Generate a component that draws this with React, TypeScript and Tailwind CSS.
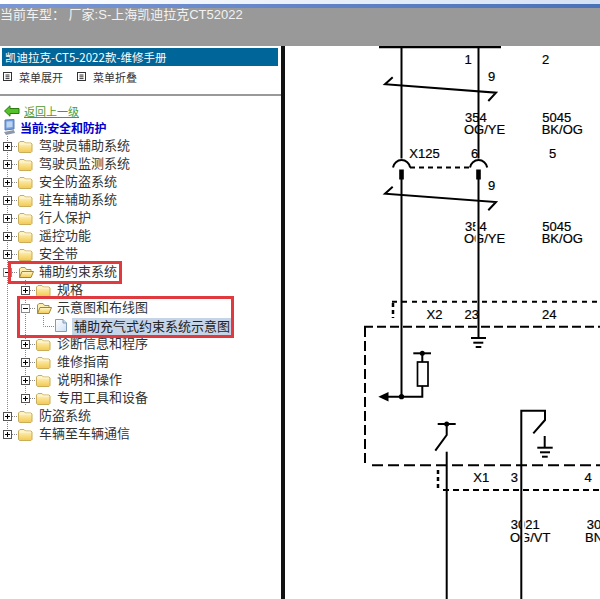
import React from "react";

const Folder = ({ open }: { open?: boolean }) => (
  <svg width="16" height="15" viewBox="0 0 16 15">
    <defs>
      <linearGradient id="fy" x1="0" y1="0" x2="0" y2="1">
        <stop offset="0" stopColor="#fff8cf" />
        <stop offset="1" stopColor="#f3c94e" />
      </linearGradient>
    </defs>
    {open ? (
      <>
        <path d="M1.5 12.5 V4 L3 2.5 H7 L8.5 4.5 H13 V6.5" fill="#fdf0b0" stroke="#a89040" />
        <path d="M1.5 12.5 L4 6.5 H15.5 L13 12.5 Z" fill="url(#fy)" stroke="#a08630" />
      </>
    ) : (
      <>
        <path d="M0.5 4 L2 2.5 H6 L7.5 4 H13 L14 5 V12.5 L13 13.5 H1.5 L0.5 12.5 Z" fill="url(#fy)" stroke="#c9ad58" />
        <path d="M1.5 5 H13" stroke="#fff8d8" />
      </>
    )}
  </svg>
);

const FileIcon = () => (
  <svg width="14" height="16" viewBox="0 0 14 16">
    <defs>
      <linearGradient id="fb" x1="0" y1="0" x2="1" y2="1">
        <stop offset="0" stopColor="#ffffff" />
        <stop offset="1" stopColor="#cfe0f4" />
      </linearGradient>
    </defs>
    <path d="M1.5 2.5 H9 L12.5 6 V14.5 H1.5 Z" fill="url(#fb)" stroke="#7f9db9" />
    <path d="M9 2.5 V6 H12.5" fill="#c9d9ee" stroke="#7f9db9" />
  </svg>
);

const Dots = ({ d }: { d: string }) => <path d={d} stroke="#888" strokeDasharray="1 1" fill="none" />;

/* cell of 18px: guide lines and the toggle of the tree */
const Guide = ({ mode }: { mode: "line" | "plus" | "minus" | "last" | "lastplus" }) => (
  <svg width="18" height="18" viewBox="0 0 18 18" className="shrink-0">
    {mode === "line" && <Dots d="M7.5 0 V18" />}
    {mode === "last" && <Dots d="M7.5 0 V10.5 H18" />}
    {mode !== "line" && mode !== "last" && (
      <>
        <Dots d={mode === "lastplus" ? "M7.5 0 V5 M12 10.5 H18" : "M7.5 0 V18 M12 10.5 H18"} />
        <rect x="3.5" y="6.5" width="8" height="8" fill="#fff" stroke={mode === "minus" ? "#8a8a8a" : "#555"} />
        <path d="M5 10.5 H10" stroke="#000" />
        {(mode === "plus" || mode === "lastplus") && <path d="M7.5 8 V13" stroke="#000" />}
      </>
    )}
  </svg>
);

type Row = {
  label: string;
  guides: ("line" | "plus" | "minus" | "last" | "lastplus")[];
  open?: boolean;
  file?: boolean;
};

const rows: Row[] = [
  { label: "驾驶员辅助系统", guides: ["plus"] },
  { label: "驾驶员监测系统", guides: ["plus"] },
  { label: "安全防盗系统", guides: ["plus"] },
  { label: "驻车辅助系统", guides: ["plus"] },
  { label: "行人保护", guides: ["plus"] },
  { label: "遥控功能", guides: ["plus"] },
  { label: "安全带", guides: ["plus"] },
  { label: "辅助约束系统", guides: ["minus"], open: true },
  { label: "规格", guides: ["line", "plus"] },
  { label: "示意图和布线图", guides: ["line", "minus"], open: true },
  { label: "辅助充气式约束系统示意图", guides: ["line", "line", "last"], file: true },
  { label: "诊断信息和程序", guides: ["line", "plus"] },
  { label: "维修指南", guides: ["line", "plus"] },
  { label: "说明和操作", guides: ["line", "plus"] },
  { label: "专用工具和设备", guides: ["line", "plus"] },
  { label: "防盗系统", guides: ["plus"] },
  { label: "车辆至车辆通信", guides: ["lastplus"] },
];

const MenuGlyph = () => (
  <svg width="10" height="10" viewBox="0 0 10 10" className="shrink-0">
    <rect x="0.5" y="0.5" width="8" height="8" fill="#fff" stroke="#333" />
    <path d="M2.5 3 H6.5 M2.5 4.8 H6.5 M2.5 6.6 H6.5" stroke="#333" />
  </svg>
);

const Wire = ({ d, w = 2 }: { d: string; w?: number }) => <path d={d} stroke="#000" strokeWidth={w} fill="none" />;

const labels: [number, number, string][] = [
  [464.5, 64, "1"], [542, 64, "2"], [488, 81, "9"],
  [465, 121.7, "354"], [464, 134.3, "OG/YE"], [542.3, 121.7, "5045"], [541.7, 134.3, "BK/OG"],
  [409.3, 158.3, "X125"], [471, 158.3, "6"], [549, 158.3, "5"], [488, 190, "9"],
  [465, 230.7, "354"], [464, 243.3, "OG/YE"], [542.3, 230.7, "5045"], [541.7, 243.3, "BK/OG"],
  [426.5, 319, "X2"], [464.5, 319, "23"], [542, 319, "24"],
  [473.3, 482, "X1"], [510.7, 482, "3"], [584.5, 482, "4"],
  [510.7, 529.3, "3021"], [510, 541.7, "OG/VT"], [586.7, 529.3, "30"], [585, 541.7, "BN"],
];

const Schematic = () => (
  <svg width="315" height="553" viewBox="285 46 315 553" className="block font-['Liberation_Sans',sans-serif] text-[13px]">
    {labels.map(([x, y, t], i) => (
      <text key={i} x={x} y={y} fill="#000" stroke="#000" strokeWidth="0.2">{t}</text>
    ))}
    <rect x="475.5" y="220" width="3" height="26" fill="#fff" />
    <rect x="521" y="518" width="3.5" height="26" fill="#fff" />
    <Wire d="M379 47 H501" w={2.5} />
    <Wire d="M401.5 47 V158.5" />
    <Wire d="M478.5 47 V158.5" />
    <Wire d="M392.7 77.3 L385 84.3 L496 92.7 L488.3 101" />
    <Wire d="M392.7 186.7 L385 193.7 L496 202 L488.3 210.3" />
    <Wire d="M393 167.5 A8.7 8.7 0 0 1 410.2 167.5" />
    <Wire d="M470 167.5 A8.7 8.7 0 0 1 487.2 167.5" />
    <path d="M410 167.5 H470" stroke="#000" strokeWidth="2" strokeDasharray="5 4" />
    <rect x="399.2" y="169.5" width="4.6" height="10" fill="#000" />
    <rect x="476.2" y="169.5" width="4.6" height="10" fill="#000" />
    <Wire d="M401.5 179 V396.7" />
    <Wire d="M478.5 179 V338" />
    <Wire d="M471 338 H486" />
    <Wire d="M473.3 342.7 H483.3" />
    <Wire d="M475.7 347 H481.3" />
    <path d="M392 301.7 H600" stroke="#000" strokeWidth="2" strokeDasharray="5 5" />
    <path d="M393 303 V318" stroke="#000" strokeWidth="2.5" strokeDasharray="4 3" />
    <path d="M364 326.7 H600" stroke="#000" strokeWidth="2" strokeDasharray="9 4" />
    <path d="M365 327 V463" stroke="#000" strokeWidth="2" strokeDasharray="10 4" />
    <path d="M372 465.3 H600" stroke="#000" strokeWidth="2" strokeDasharray="11 5" />
    <path d="M438 470 V489" stroke="#000" strokeWidth="2.5" strokeDasharray="4 3" />
    <path d="M443 490 H600" stroke="#000" strokeWidth="2" strokeDasharray="6 4" />
    <Wire d="M413.3 353.3 H431" />
    <circle cx="422.3" cy="353.3" r="2.5" />
    <Wire d="M422.3 353.3 V362 M422.3 386 V396.7 H386" />
    <rect x="417.5" y="362" width="10.5" height="24" fill="#fff" stroke="#000" strokeWidth="1.7" />
    <circle cx="401.5" cy="396.7" r="2.6" />
    <path d="M378.3 396.7 L388.5 392 V401.5 Z" />
    <Wire d="M437.7 424 H455.7" />
    <circle cx="446.7" cy="424" r="2.5" />
    <Wire d="M446.7 424 V435 L435.3 450.7" />
    <Wire d="M446.7 451.7 V599" />
    <Wire d="M521.3 599 V410.7 H545 V420 L533.3 433.3" />
    <Wire d="M544.7 436 V447.7" />
    <Wire d="M537.3 447.7 H552.7" />
    <Wire d="M540 452.3 H550" />
    <Wire d="M542 456.7 H547.7" />
  </svg>
);

export default function App() {
  return (
    <div className="relative flex h-[599px] w-[600px] flex-col overflow-hidden bg-white font-['Noto_Sans_CJK_SC',sans-serif]">
      <div className="h-[4px] shrink-0 bg-linear-to-r from-[#ffffff] to-[#d5e2f5]" />
      <div className="h-[4px] shrink-0 bg-linear-to-r from-[#7b97d6] to-[#4a72b8]" />
      <div className="h-[38px] shrink-0 bg-[#999999] text-[13px] leading-[14px] whitespace-pre text-[#f2f2f2] font-['Liberation_Sans','Noto_Sans_CJK_SC',sans-serif]">
        {"当前车型： 厂家:S-上海凯迪拉克CT52022"}
      </div>
      <div className="flex min-h-0 flex-1">
        <div className="relative w-[281px] shrink-0">
          <div className="mx-[2px] mt-[2px] h-[18px] w-[276px] bg-[#006699] pl-[3px] text-[11.5px] leading-[18px] text-white">
            凯迪拉克-CT5-2022款-维修手册
          </div>
          <div className="border-b-2 border-[#999] pb-[6px]">
            <div className="flex h-[22px] items-center pl-[3px] text-[11px] text-[#333]">
              <MenuGlyph />
              <span className="ml-[6px] w-[58px]">菜单展开</span>
              <MenuGlyph />
              <span className="ml-[6px]">菜单折叠</span>
            </div>
          </div>
          <div className="mt-[7px] flex h-[16px] items-center pl-[4px]">
            <svg width="16" height="12" viewBox="0 0 16 12" className="shrink-0">
              <path d="M0.5 6 L6 0.8 V3.5 H15 V8.5 H6 V11.2 Z" fill="#55c22a" stroke="#2d7a12" />
            </svg>
            <span className="ml-[4px] text-[11px] leading-[16px] text-[#4e9a2e] underline">返回上一级</span>
          </div>
          <div className="flex h-[17px] items-center pl-[3px]">
            <svg width="13" height="17" viewBox="0 0 13 17" className="shrink-0">
              <path d="M2 1 L11 0.5 V10 L2 11 Z" fill="#6f9cdc" stroke="#5a7fb5" />
              <path d="M3.5 2.5 L9.5 2.2 V8 L3.5 8.8 Z" fill="#bcd4f2" />
              <path d="M1 13 L11 11 L12 14 L3 16 Z" fill="#8e97a8" />
            </svg>
            <span className="ml-[4px] text-[12px] font-bold tracking-[-0.2px] text-[#0000cc]">当前:安全和防护</span>
          </div>
          <div className="text-[13px] text-[#333]">
            {rows.map((r) => (
              <div key={r.label} className="flex h-[18px] items-center whitespace-nowrap">
                {r.guides.map((g, i) => (
                  <Guide key={i} mode={g} />
                ))}
                {r.file ? (
                  <>
                    <FileIcon />
                    <span className="mt-[2px] ml-[4px] flex h-[17px] w-[159px] items-center bg-[#c6d4e8] pl-[2px] text-[#222]">{r.label}</span>
                  </>
                ) : (
                  <>
                    <span className="mt-[3px] flex w-[21px] shrink-0"><Folder open={r.open} /></span>
                    <span>{r.label}</span>
                  </>
                )}
              </div>
            ))}
          </div>
        </div>
        <div className="w-[4px] shrink-0 bg-[#111]" />
        <Schematic />
      </div>
      <div className="absolute left-[8px] top-[261px] h-[23px] w-[114px] border-[3px] border-[#e0393e]" />
      <div className="absolute left-[17px] top-[296px] h-[42px] w-[217px] border-[3px] border-[#e0393e]" />
    </div>
  );
}
